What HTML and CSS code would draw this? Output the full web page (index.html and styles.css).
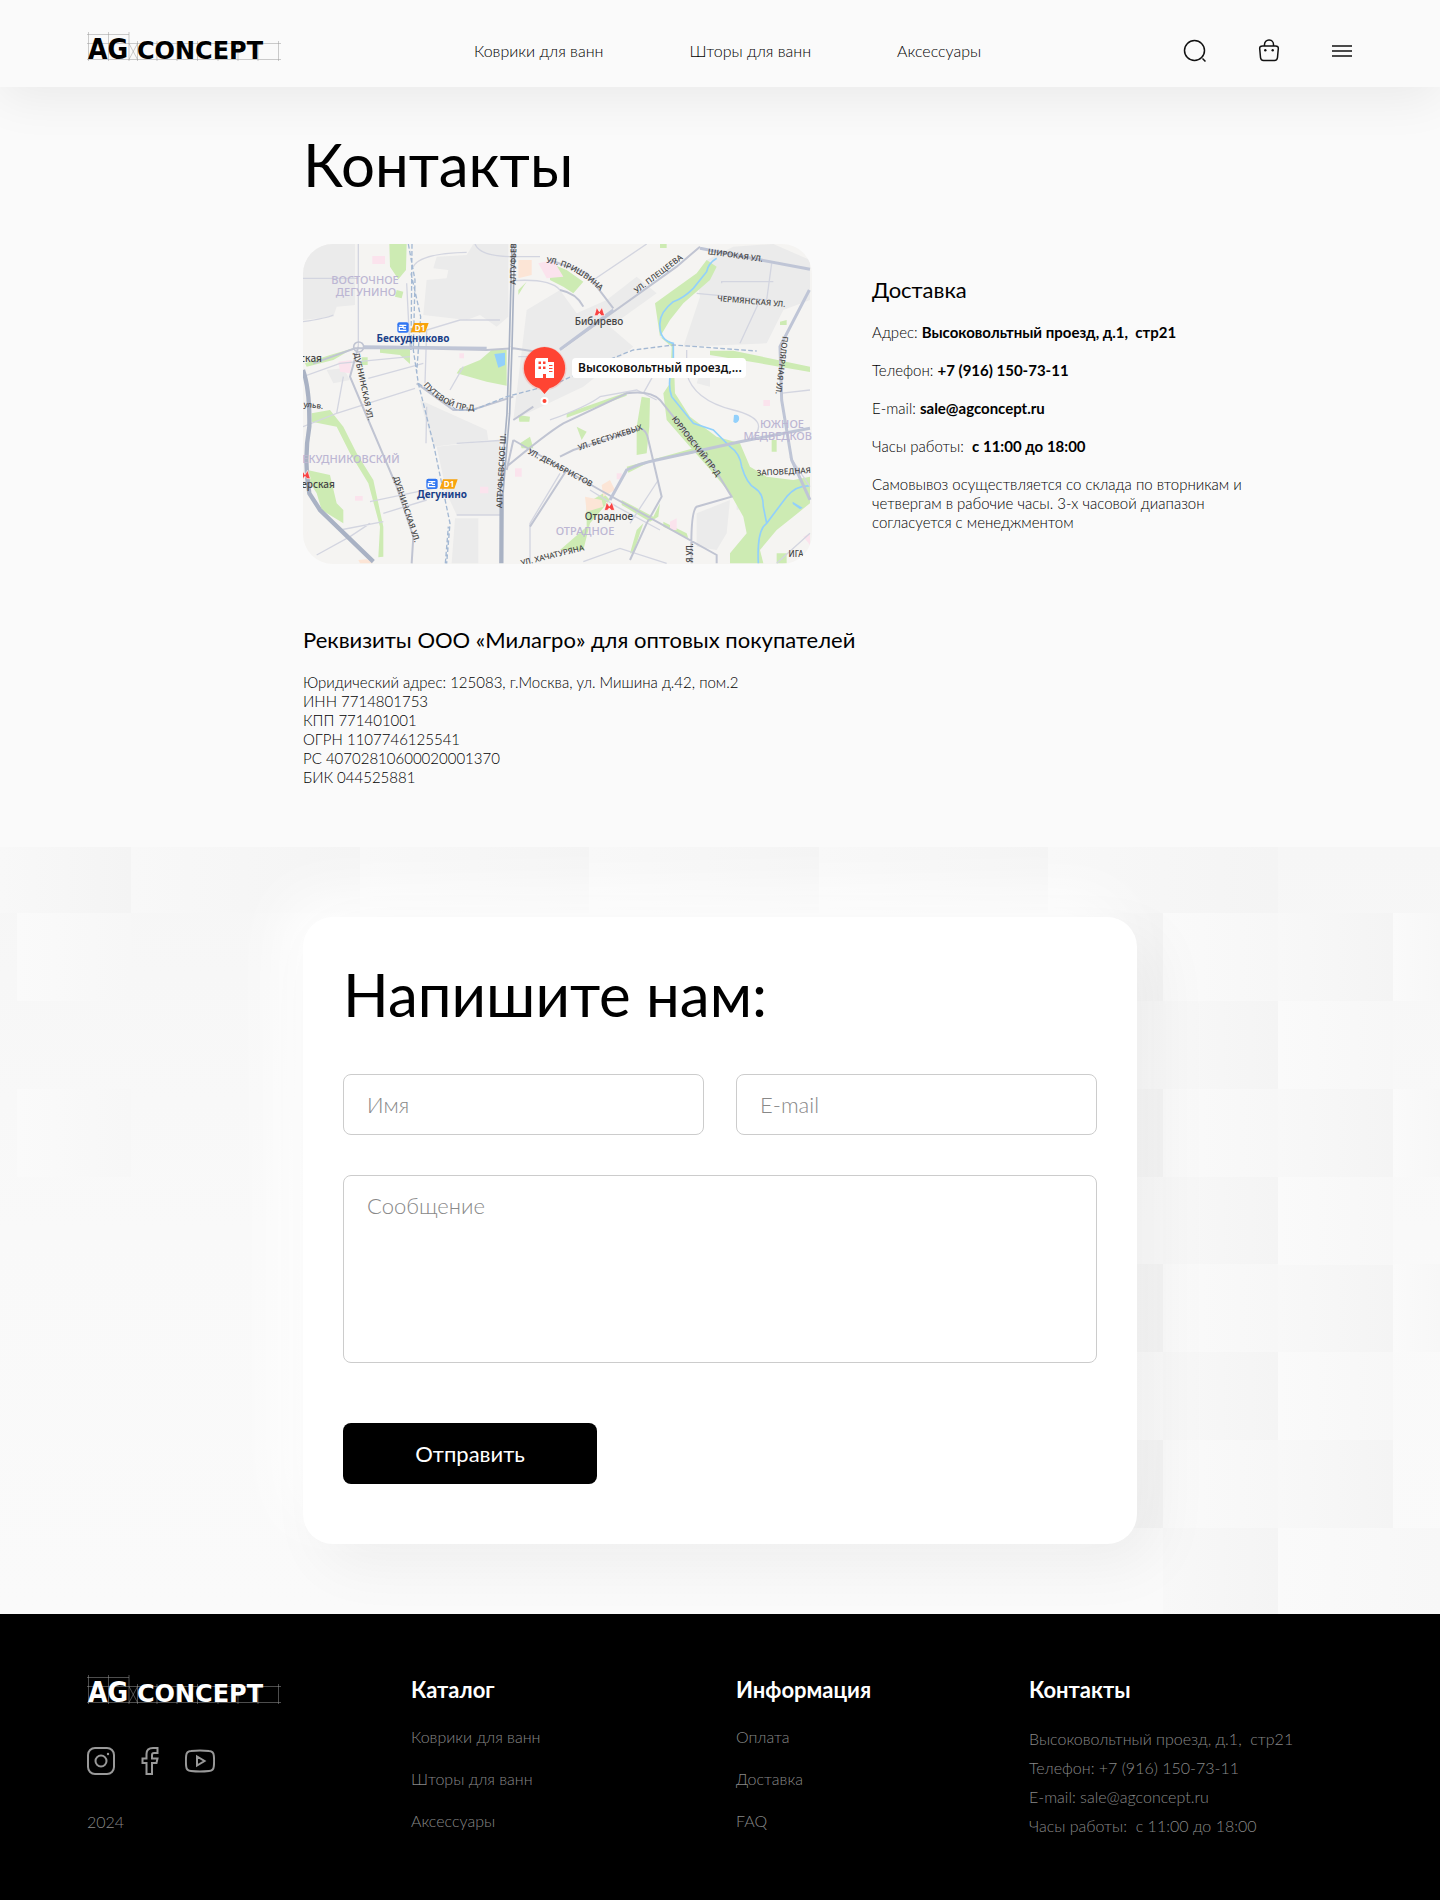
FILE: index.html
```html
<!DOCTYPE html>
<html lang="ru">
<head>
<meta charset="utf-8">
<meta name="viewport" content="width=device-width, initial-scale=1">
<title>Контакты — AG Concept</title>
<link rel="stylesheet" href="styles.css">
</head>
<body>
<header class="header">
  <a class="logo" href="#" aria-label="AG Concept">
    <svg class="logo-svg" viewBox="0 0 194 30" aria-hidden="true">
      <path class="logo-grid" d="M0 3.5H42M0 12.500H194M0 28.500H194M1.500 1V30M21.500 1V30M42 1V30M50.500 10V30M70 10V30M90 10V30M110.500 10V30M131 10V30M151 10V30M171 10V30M191.500 10V30M42 12.500L50.500 28.500M50.500 12.500L42 28.500"/>
      <text class="logo-big" x="1" y="28">AG</text>
      <text class="logo-small" x="50" y="28">CONCEPT</text>
    </svg>
  </a>
  <nav class="nav">
    <a href="#">Коврики для ванн</a>
    <a href="#">Шторы для ванн</a>
    <a href="#">Аксессуары</a>
  </nav>
  <div class="tools">
    <button class="tool" type="button" aria-label="Поиск">
      <svg viewBox="0 0 24 24"><circle cx="11.500" cy="11.500" r="10"/><path d="M19.500 19.500L22.500 22.500"/></svg>
    </button>
    <button class="tool" type="button" aria-label="Корзина">
      <svg viewBox="0 0 24 24"><path d="M5.500 7H18.500Q21.500 7 21.300 9.500L20.500 18.500Q20.200 21.500 17.500 21.500H6.500Q3.800 21.500 3.500 18.500L2.700 9.500Q2.500 7 5.500 7ZM7.500 7V5.500a4.500 4.500 0 0 1 9 0V7"/><circle class="dot" cx="8.300" cy="11.300" r="1.200"/><circle class="dot" cx="15.700" cy="11.300" r="1.200"/></svg>
    </button>
    <button class="tool" type="button" aria-label="Меню">
      <svg viewBox="0 0 24 24"><path d="M2 7H22M2 12H22M2 17H22"/></svg>
    </button>
  </div>
</header>

<main>
  <section class="contacts">
    <h1 class="title">Контакты</h1>
    <div class="contacts-row">
      <div class="map">
        <svg viewBox="0 0 509 320" preserveAspectRatio="xMidYMid slice" role="img" aria-label="Карта: Высоковольтный проезд">
          <rect width="509" height="320" fill="#f5f4f2"/>
          <g transform="translate(-3 -4) scale(.33333)">
            <g fill="#ebebeb">
              <path d="M9 12H165V195L110 200L100 230L9 240ZM380 120L440 115L445 90L400 85L410 50L500 45L520 12H625V230L590 260L540 225L500 240L370 225ZM360 480L560 570L565 600L400 620ZM410 620L600 600V825H470L440 760ZM465 835H535V970H455ZM680 210L780 150L830 220L920 180L1010 110L1070 160L930 260L1000 320L850 440L640 540Z"/>
              <path d="M1220 60L1300 20L1420 12L1530 60V180L1450 210L1400 310L1150 320L1200 170L1190 110ZM1190 820L1290 780L1280 880L1250 930L1190 920ZM1310 770L1360 760L1350 800L1310 810ZM80 390L130 385L150 420L100 430ZM1200 400L1230 410V440L1190 430Z"/>
            </g>
            <g fill="#cdebb3">
              <path d="M268 12H320L318 90L295 118L270 80ZM290 150L310 155L305 175L285 170ZM240 325H330V372L300 345L240 338ZM185 352H203V375H185ZM15 370L90 345L160 325L100 360L20 380ZM480 385L540 360L575 330H620V437L560 425L470 400ZM35 520L90 510L130 560L170 640L220 720L250 860V950L235 952L240 860L205 730L150 640L110 560L35 545ZM22 690L90 705L110 790L130 810V850L65 810L50 760L25 720ZM655 525L690 530L688 545H658ZM660 610L690 590L700 625H665ZM655 150L680 125L670 140L655 165Z"/>
              <path d="M1220 60L1250 80L1230 120L1150 190L1110 240L1080 290L1120 310L1125 460L1170 530L1250 590L1320 610L1350 680L1400 710L1480 720L1530 710V790L1480 830L1430 870L1380 930L1390 970H1290V940L1340 880L1330 830L1290 760L1240 700L1170 620L1100 540L1090 460L1110 430L1115 320L1080 290L1065 190L1120 150L1190 100ZM750 70L800 90L850 125L820 160L790 140L750 120ZM800 520L980 457L980 467L800 533ZM1025 470L1050 475L1048 560L1040 640L1010 645L1010 560ZM980 680L1180 625V640L1050 665L985 698ZM860 790L910 760L930 780L870 850L850 930L780 930L860 860ZM1230 332H1300L1530 380V396L1380 370L1230 345ZM1090 845L1160 880L1165 895L1090 860ZM830 560L860 575L845 600ZM965 780L1060 830L1080 790L1075 830L1050 845L965 795ZM1010 870L1030 850L1000 940H990ZM1415 600H1430V635H1415ZM1080 12H1100V24H1080ZM1430 940H1460V970H1430ZM1440 245L1460 240V255H1440Z"/>
            </g>
            <g fill="#fbe3ed">
              <path d="M217 48H255V72H217ZM115 365L155 360L150 400L120 395ZM540 740H565V760H540ZM645 685H665V710H645ZM715 70L760 60L790 110L740 115ZM1390 480H1410V498H1390ZM950 700H965V718H950ZM1110 845L1130 835V870H1110ZM1510 890L1530 880V915ZM165 768H188V782H165ZM478 340H492V355H478Z"/>
            </g>
            <path fill="#fce5d6" d="M655 60H695V105L655 115ZM905 735L930 720L945 750L910 770ZM855 770L905 780L910 800L860 815ZM175 960L200 958L220 970H180Z"/>
            <path fill="#92d0fb" d="M583 342L615 338V375L595 383ZM1302 525Q1320 520 1317 540Q1310 555 1300 545ZM1478 785L1508 803L1500 808L1478 792Z"/>
            <g fill="none" stroke="#92d0fb" stroke-width="5">
              <path d="M1250 55Q1225 70 1220 95L1180 145Q1150 175 1120 185Q1075 220 1080 260Q1080 300 1120 310V370Q1100 430 1115 470L1180 550L1240 570L1290 620Q1320 640 1325 680Q1340 730 1365 745T1390 800L1400 850M1530 738Q1490 735 1460 770L1400 850Q1370 870 1375 970"/>
            </g>
            <g fill="none" stroke="#d3d5e0" stroke-width="4">
              <path d="M9 115H175M175 12V320M9 245Q80 235 100 225M205 415L370 370M110 520L345 445M210 785L400 745M250 820L380 780M120 870L250 845M50 945L150 890L210 850M320 130L330 330M375 430L380 270L480 240L600 240M340 80Q360 40 500 37M525 12Q540 50 640 50H720M640 122Q750 115 780 150M450 450L490 380M9 410L120 370L330 350M380 500L378 610M470 610L620 600M470 825H600M690 965V850L780 700M655 350H740M9 560L110 520L130 410"/>
              <path d="M880 120L1040 12M1190 160L1400 180M1400 180L1415 70M1320 310L1380 180M1160 330V400Q1180 480 1300 510T1350 600M1440 460L1530 450M1470 650L1530 740M1265 130V125H1420M990 850L1075 720M870 750L950 800L1080 870M1030 460L1080 370M750 540Q860 500 900 470L1010 450L1070 480M1430 970L1530 880M850 965L960 925L1100 970"/>
            </g>
            <g fill="none" stroke="#c0c4d2" stroke-width="6">
              <path d="M175 320L150 410L205 540L290 740L340 890L335 970M40 370L165 325H330L560 330L640 325L740 340M350 430L460 510H515L640 470M640 600L900 750L1250 945V970M620 680Q740 580 790 550L980 460Q1050 450 1080 480L1240 680L1295 770L1190 800Q1170 815 1175 970M780 650Q800 640 820 630L1020 565Q1040 570 1045 600L1085 770L1040 850L990 960M780 330L1130 80L1200 20M780 150Q830 160 850 200M750 60L860 100L940 205M620 690L640 600M690 860L800 690M640 540L700 500"/>
              <path stroke-width="9" stroke="#bfc5d6" d="M190 320L560 325M780 328L940 210M930 780L980 690Q1020 670 1070 660L1320 605L1530 565M1200 25L1530 88M1528 150L1440 320L1445 480L1475 660L1530 780"/>
            </g>
            <g fill="none" stroke="#a9b2c4">
              <path stroke-width="13" d="M640 12L632 320L625 520L605 760L604 970M9 390Q30 450 28 560Q10 660 28 760L60 810L220 965"/>
              <path stroke="#f5f4f2" stroke-width="3" d="M640 12L632 320L625 520L605 760"/>
            </g>
            <g fill="none" stroke="#a3b8d3" stroke-width="4" stroke-dasharray="14 7">
              <path d="M325 12L345 120L340 330L355 430L400 610L450 850L440 970M333 100L362 230L350 400M355 430L470 510H520L620 470L770 430L900 370L1000 330L1120 315L1370 333M336 12L333 330M436 970L445 860"/>
            </g>
            <circle cx="176" cy="321" r="15" fill="none" stroke="#c0c4d2" stroke-width="5"/>
            <g fill="#f84444" stroke="#fff" stroke-width="2">
              <path d="M883 227L890 202L898 215L906 202L914 227H904L898 220L892 227ZM913 811L920 786L928 799L936 786L944 811H934L928 804L922 811ZM0 716L7 691L15 704L23 691L31 716H21L15 709L9 716Z"/>
            </g>
            <g>
              <rect x="292" y="247" width="34" height="31" rx="6" fill="#3176f2"/><path d="M298 256H319M309 256V262H298V271H319M309 264H318" fill="none" stroke="#fff" stroke-width="4"/>
              <path fill="#f8a30c" d="M342 249H386L376 277H332ZM429 718H473L463 746H419Z"/>
              <rect x="379" y="716" width="34" height="31" rx="6" fill="#3176f2"/><path d="M385 725H406M396 725V731H385V740H406M396 733H405" fill="none" stroke="#fff" stroke-width="4"/>
            </g>
          </g>
          <defs>
            <path id="st-prish" d="M236 18Q272 20 302 52"/>
            <path id="st-put" d="M116 136Q142 170 178 166"/>
          </defs>
          <g class="m-area">
            <text x="62" y="40">ВОСТОЧНОЕ</text><text x="63" y="52">ДЕГУНИНО</text>
            <text x="48" y="219">ЕКУДНИКОВСКИЙ</text><text x="282" y="291">ОТРАДНОЕ</text>
            <text x="479" y="184">ЮЖНОЕ</text><text x="479" y="196">МЕДВЕДКОВО</text>
          </g>
          <g class="m-place">
            <text x="296" y="81">Бибирево</text><text x="306" y="276">Отрадное</text>
            <text x="8" y="118">ская</text><text x="15" y="244">ерская</text>
          </g>
          <g class="m-rail"><text x="110" y="98">Бескудниково</text><text x="139" y="254">Дегунино</text></g>
          <g class="m-line"><text x="117" y="87">D1</text><text x="146" y="243">D1</text></g>
          <g class="m-street">
            <text transform="translate(10 164) rotate(6)">ульв.</text>
            <text transform="translate(213 20) rotate(-89)">АЛТУФЬЕВ</text>
            <text transform="translate(201 227) rotate(-87)">АЛТУФЬЕВСКОЕ Ш.</text>
            <text transform="translate(58 143) rotate(78)">ДУБНИНСКАЯ УЛ.</text>
            <text transform="translate(101 266) rotate(72)">ДУБНИНСКАЯ УЛ.</text>
            <text><textPath href="#st-put" startOffset="50%">ПУТЕВОЙ ПР-Д</textPath></text>
            <text><textPath href="#st-prish" startOffset="50%">УЛ. ПРИШВИНА</textPath></text>
            <text transform="translate(357 32) rotate(-37)">УЛ. ПЛЕЩЕЕВА</text>
            <text transform="translate(432 14) rotate(8)">ШИРОКАЯ УЛ.</text>
            <text transform="translate(448 60) rotate(5)">ЧЕРМЯНСКАЯ УЛ.</text>
            <text transform="translate(476 121) rotate(97)">ПОЛЯРНАЯ УЛ.</text>
            <text transform="translate(391 204) rotate(52)">ЮРЛОВСКИЙ ПР-Д</text>
            <text transform="translate(308 196) rotate(-18)">УЛ. БЕСТУЖЕВЫХ</text>
            <text transform="translate(256 226) rotate(28)">УЛ. ДЕКАБРИСТОВ</text>
            <text transform="translate(488 230) rotate(-3)">ЗАПОВЕДНАЯ УЛ.</text>
            <text transform="translate(250 314) rotate(-14)">УЛ. ХАЧАТУРЯНА</text>
            <text transform="translate(390 309) rotate(-90)">Я УЛ.</text>
            <text x="493" y="313">ИГА</text>
          </g>
          <g>
            <rect x="269" y="114" width="174" height="20" rx="4" fill="#fff"/>
            <text class="m-pin" x="275" y="128">Высоковольтный проезд,...</text>
            <circle cx="241.500" cy="124.500" r="22" fill="#f43" opacity=".18"/>
            <path fill="#f43" d="M241.500 103a21 21 0 0 1 5 41.300L241.500 150L236.500 144.300A21 21 0 0 1 241.500 103Z"/>
            <path fill="#fff" fill-rule="evenodd" d="M233 114H245V118H251V134H243V130H240V134H232V116ZM235.500 117.500V120H238V117.500ZM240 117.500V120H242.500V117.500ZM235.500 122.500V125H238V122.500ZM240 122.500V125H242.500V122.500ZM246 121V122H249.500V121ZM246 124V125H249.500V124ZM246 127V128H249.500V127Z"/>
            <circle cx="241.500" cy="157" r="3" fill="#f43" stroke="#fff" stroke-width="2"/>
          </g>
        </svg>
      </div>
      <div class="delivery">
        <h2 class="subtitle">Доставка</h2>
        <p>Адрес: <b>Высоковольтный проезд, д.1,&nbsp; стр21</b></p>
        <p>Телефон: <b>+7 (916) 150-73-11</b></p>
        <p>E-mail: <b>sale@agconcept.ru</b></p>
        <p>Часы работы:&nbsp; <b>с 11:00 до 18:00</b></p>
        <p>Самовывоз осуществляется со склада по вторникам и<br>четвергам в рабочие часы. 3-х часовой диапазон<br>согласуется с менеджментом</p>
      </div>
    </div>
    <div class="requisites">
      <h2 class="subtitle">Реквизиты ООО «Милагро» для оптовых покупателей</h2>
      <p>Юридический адрес: 125083, г.Москва, ул. Мишина д.42, пом.2<br>ИНН 7714801753<br>КПП 771401001<br>ОГРН 1107746125541<br>РС 40702810600020001370<br>БИК 044525881</p>
    </div>
  </section>

  <section class="write">
    <svg class="write-bg" viewBox="0 0 1440 767" preserveAspectRatio="xMidYMid slice" aria-hidden="true">
      <defs>
        <linearGradient id="dark"><stop offset="0" stop-color="#f8f8f8"/><stop offset="1" stop-color="#f4f4f4"/></linearGradient>
        <linearGradient id="light"><stop offset="0" stop-color="#fafafa"/><stop offset="1" stop-color="#f7f7f7"/></linearGradient>
        <linearGradient id="base" x2="0" y2="1"><stop offset="0" stop-color="#f6f6f6"/><stop offset=".5" stop-color="#f9f9f9"/><stop offset="1" stop-color="#fafafa"/></linearGradient>
      </defs>
      <rect width="1440" height="767" fill="url(#base)"/>
      <g fill="url(#dark)">
        <rect width="131" height="66"/><rect x="131" width="229" height="66"/><rect x="360" width="229" height="66"/><rect x="589" width="230" height="66"/><rect x="819" width="229" height="66"/><rect x="1048" width="230" height="66"/>
        <rect x="1048" y="66" width="115" height="88"/><rect x="1048" y="242" width="115" height="88"/><rect x="1048" y="417" width="115" height="88"/><rect x="1048" y="593" width="115" height="88"/>
        <rect x="1163" y="154" width="115" height="88"/><rect x="1163" y="330" width="115" height="88"/><rect x="1163" y="505" width="115" height="88"/><rect x="1163" y="681" width="115" height="86"/>
        <rect x="1278" y="66" width="115" height="88"/><rect x="1278" y="242" width="115" height="88"/><rect x="1278" y="417" width="115" height="88"/><rect x="1278" y="593" width="115" height="88"/>
      </g>
      <g fill="url(#light)">
        <rect x="17" y="66" width="114" height="88"/><rect x="17" y="242" width="114" height="88"/>
        <rect x="1163" y="66" width="115" height="88"/><rect x="1163" y="242" width="115" height="88"/><rect x="1163" y="417" width="115" height="88"/><rect x="1163" y="593" width="115" height="88"/>
        <rect x="1278" y="154" width="115" height="88"/><rect x="1278" y="330" width="115" height="88"/><rect x="1278" y="505" width="115" height="88"/><rect x="1278" y="681" width="162" height="86"/>
        <rect x="1393" y="66" width="47" height="88"/><rect x="1393" y="242" width="47" height="88"/><rect x="1393" y="417" width="47" height="88"/>
      </g>
    </svg>
    <form class="card">
      <h2 class="title">Напишите нам:</h2>
      <div class="fields">
        <input class="field" type="text" name="name" placeholder="Имя" aria-label="Имя">
        <input class="field" type="email" name="email" placeholder="E-mail" aria-label="E-mail">
        <textarea class="field area" name="message" placeholder="Сообщение" aria-label="Сообщение"></textarea>
      </div>
      <button class="send" type="submit">Отправить</button>
    </form>
  </section>
</main>

<footer class="footer">
  <div class="brand">
    <a class="logo" href="#" aria-label="AG Concept">
      <svg class="logo-svg" viewBox="0 0 194 30" aria-hidden="true">
        <path class="logo-grid" d="M0 3.500H42M0 12.500H194M0 28.500H194M1.500 1V30M21.500 1V30M42 1V30M50.500 10V30M70 10V30M90 10V30M110.500 10V30M131 10V30M151 10V30M171 10V30M191.500 10V30M42 12.500L50.500 28.500M50.500 12.500L42 28.500"/>
        <text class="logo-big" x="1" y="28">AG</text>
        <text class="logo-small" x="50" y="28">CONCEPT</text>
      </svg>
    </a>
    <div class="social">
      <a href="#" aria-label="Instagram"><svg width="28" height="28" viewBox="0 0 28 28"><rect x="1" y="1" width="26" height="26" rx="7"/><circle cx="14" cy="14" r="5.500"/><circle class="dot" cx="21" cy="7" r="1.200"/></svg></a>
      <a href="#" aria-label="Facebook"><svg width="18" height="28" viewBox="0 0 18 28"><path d="M16.500 1V6H13Q11 6 11 8V11.500H16.500L15.500 16H11V27H5.500V16H1.500V11.500H5.500V7Q5.500 1 12 1Z"/></svg></a>
      <a href="#" aria-label="YouTube"><svg width="30" height="28" viewBox="0 0 30 28"><path d="M6 4Q15 3 24 4Q28.500 4.300 28.800 8.500Q29.400 14 28.800 19.500Q28.500 23.700 24 24Q15 25 6 24Q1.500 23.700 1.200 19.500Q.6 14 1.200 8.500Q1.500 4.300 6 4ZM12 9.500V18.500L19.500 14Z"/></svg></a>
    </div>
    <p class="year">2024</p>
  </div>
  <nav class="foot-col" aria-label="Каталог">
    <h3>Каталог</h3>
    <a href="#">Коврики для ванн</a>
    <a href="#">Шторы для ванн</a>
    <a href="#">Аксессуары</a>
  </nav>
  <nav class="foot-col" aria-label="Информация">
    <h3>Информация</h3>
    <a href="#">Оплата</a>
    <a href="#">Доставка</a>
    <a href="#">FAQ</a>
  </nav>
  <div class="foot-col foot-contacts">
    <h3>Контакты</h3>
    <p>Высоковольтный проезд, д.1,&nbsp; стр21<br>Телефон: +7 (916) 150-73-11<br>E-mail: sale@agconcept.ru<br>Часы работы:&nbsp; с 11:00 до 18:00</p>
  </div>
</footer>
</body>
</html>
```
FILE: styles.css
```css
* { box-sizing: border-box; }
body {
  margin: 0;
  background: #fafafa;
  color: #000;
  font: 300 15px/19px Lato, "Open Sans", sans-serif;
}
h1, h2, h3, p { margin: 0; font-weight: 400; }
p { font-weight: 300; }
a { color: inherit; text-decoration: none; }
button, input, textarea { font: inherit; }

.header {
  display: grid;
  grid-template-columns: 387fr 709fr 171fr;
  align-items: center;
  height: 87px;
  padding: 14px 86px 0 87px;
  position: relative;
  background: #fafafa;
  box-shadow: 0 10px 50px rgba(0, 0, 0, .07);
}
.logo { display: block; color: #000; }
.logo-svg { display: block; width: 194px; height: 30px; }
.header .logo { padding-bottom: 10px; }
.logo-svg text { font-family: "DejaVu Sans", sans-serif; font-weight: 700; fill: currentColor; }
.logo-svg .logo-big { font-family: "DejaVu Sans Condensed", "DejaVu Sans", sans-serif; font-size: 28px; }
.logo-small { font-size: 24px; }
.logo-grid { fill: none; stroke: #999; stroke-opacity: .5; }
.nav { display: flex; gap: 86px; font-size: 16px; line-height: 24px; }
.tools { display: flex; justify-content: space-between; }
.tool { padding: 0; border: 0; background: none; width: 24px; height: 24px; }
.tool svg { display: block; fill: none; stroke: #111; stroke-width: 1.5; }
.tool .dot { fill: #111; stroke: none; }

.contacts { padding: 41px 0 60px max(24px, calc(50% - 417px)); }
.title { font-size: 60px; line-height: 72px; }
.contacts-row { display: grid; grid-template-columns: 509fr 568fr; gap: 60px; margin-top: 44px; }
.map { height: 320px; border-radius: 30px; overflow: hidden; }
.map svg { display: block; width: 100%; height: 100%; }
.map text { text-anchor: middle; font-family: "Noto Sans", sans-serif; font-weight: 500; }
.m-area text { font-size: 11px; fill: #bcb6d3; }
.m-place text { font-size: 10px; fill: #444; }
.m-rail text { font-size: 10px; font-weight: 700; fill: #1a4189; }
.m-line text { font-size: 8px; font-weight: 700; fill: #fff; }
.m-street text { font-size: 8px; fill: #444; }
.map .m-pin { font-size: 12px; font-weight: 600; text-anchor: start; fill: #111; }

.delivery { display: grid; align-content: start; gap: 19px; padding-top: 31px; }
.subtitle { font-size: 22px; line-height: 29px; }
.delivery b { font-weight: 700; }
.requisites { display: grid; gap: 19px; margin-top: 61px; }

.write { position: relative; padding: 70px 24px; overflow: hidden; }
.write-bg { position: absolute; inset: 0; width: 100%; height: 100%; }
.card {
  position: relative;
  max-width: 834px;
  margin: 0 auto;
  padding: 41px 40px 60px;
  border-radius: 30px;
  background: #fff;
  box-shadow: 20px 20px 60px rgba(0, 0, 0, .05), -20px -20px 60px #fff;
}
.fields { display: grid; grid-template-columns: 1fr 1fr; gap: 40px 32px; margin-top: 44px; }
.field {
  width: 100%;
  height: 61px;
  padding: 15px 23px;
  border: 1px solid #ccc;
  border-radius: 8px;
  background: #fff;
  font-size: 22px;
  line-height: 29px;
  resize: none;
}
.field::placeholder { color: #888; opacity: 1; }
.area { display: block; height: 188px; grid-column: 1 / -1; }
.send {
  display: block;
  width: 254px;
  height: 61px;
  margin-top: 60px;
  border: 0;
  border-radius: 8px;
  background: #000;
  color: #fff;
  font-size: 22px;
  font-weight: 400;
}

.footer {
  display: grid;
  grid-template-columns: 324fr 325fr 293fr 327fr;
  padding: 60px 84px 60px 87px;
  background: #000;
  color: #888;
  font-size: 16px;
  line-height: 22px;
}
.footer .logo { color: #fff; }
.social { display: flex; align-items: center; gap: 26px; margin-top: 43px; }
.social svg { display: block; fill: none; stroke: #999; stroke-width: 2; }
.social .dot { fill: #999; stroke: none; }
.year { margin-top: 36px; }
.foot-col { display: flex; flex-direction: column; align-items: flex-start; gap: 20px; }
.foot-col h3 { font-size: 22px; line-height: 32px; font-weight: 700; color: #fff; }
.foot-contacts { gap: 18px; }
.foot-contacts p { line-height: 29px; }
```
